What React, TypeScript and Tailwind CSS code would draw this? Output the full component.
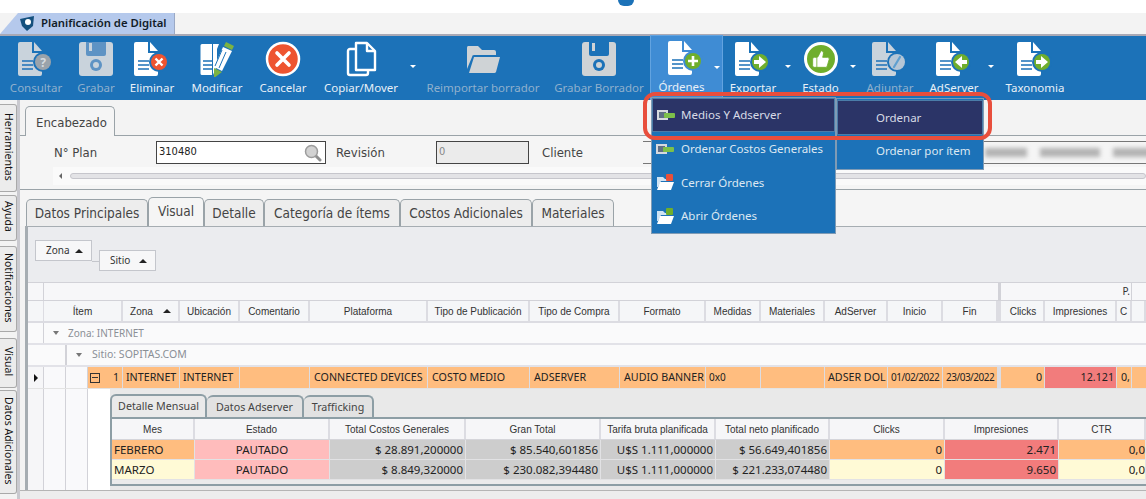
import React from 'react'
import { ThumbsUp } from 'lucide-react'

const BLUE = '#1c72b8'

// page with folded corner + round badge, used by most toolbar buttons
const DocIcon = ({ fill = '#fff', line = BLUE, badge, ring = BLUE, children }: { fill?: string; line?: string; badge: string; ring?: string; children?: React.ReactNode }) => (
  <svg width="38" height="36" viewBox="0 0 38 36">
    <path d="M3 1h12v11h10v21a2 2 0 0 1-2 2H3a2 2 0 0 1-2-2V3a2 2 0 0 1 2-2z" fill={fill} />
    <path d="M17 1l8 9h-8z" fill={fill} />
    <path d="M5 20h11M5 24h11M5 28h11" stroke={line} strokeWidth="1.4" />
    <circle cx="26" cy="21" r="10" fill={ring} />
    <circle cx="26" cy="21" r="8" fill={badge} />
    {children}
  </svg>
)

const Plus = () => <path d="M26 16v10M21 21h10" stroke="#fff" strokeWidth="2.6" />
const Cross = () => <path d="M22.5 17.500l7 7M29.500 17.500l-7 7" stroke="#fff" strokeWidth="2.4" />
const ArrowRight = () => <path d="M20 19h5v-4l7 6-7 6v-4h-5z" fill="#fff" />
const ArrowLeft = () => <path d="M32 19h-5v-4l-7 6 7 6v-4h5z" fill="#fff" />

const Floppy = ({ fill, hole }: { fill: string; hole: string }) => (
  <svg width="36" height="36" viewBox="0 0 36 36">
    <path d="M4 1h28a3 3 0 0 1 3 3v28a3 3 0 0 1-3 3H4a3 3 0 0 1-3-3V4a3 3 0 0 1 3-3z" fill={fill} />
    <path d="M8 1v12a2 2 0 0 0 2 2h16a2 2 0 0 0 2-2V1z" fill={hole} />
    <rect x="11" y="2" width="3" height="8" fill={fill} />
    <circle cx="18" cy="24" r="6" fill={hole} />
    <circle cx="18" cy="24" r="3" fill={fill} />
  </svg>
)

const Caret = () => (
  <div className="w-[10px] flex justify-center pt-[29px]">
    <div className="w-0 h-0 border-x-[3px] border-x-transparent border-t-[3px] border-t-white" />
  </div>
)

const Tool = ({ label, w, off, children }: { label: string; w: string; off?: boolean; children: React.ReactNode }) => (
  <div className={`${w} flex flex-col items-center pt-[5px]`}>
    <div className="h-[36px] flex items-center justify-center">{children}</div>
    <div className={`mt-[3px] text-[11.500px] leading-[16px] whitespace-nowrap ${off ? 'text-[#8fb0cd]' : 'text-[#e8f0f7]'}`}>{label}</div>
  </div>
)

const Toolbar = () => (
  <div className="h-[66px] bg-[#1c72b8] border-t-2 border-[#a9a9b5] flex pl-[6px] shrink-0">
    <Tool label="Consultar" w="w-[60px]" off>
      <DocIcon fill="#c9d3dc" line="#1c72b8" badge="#9aa3ab">
        <text x="26" y="25.500" textAnchor="middle" fontSize="12" fontWeight="700" fill="#d7dce0">?</text>
      </DocIcon>
    </Tool>
    <Tool label="Grabar" w="w-[60px]" off>
      <Floppy fill="#c9d3dc" hole="#5e93c4" />
    </Tool>
    <Tool label="Eliminar" w="w-[52px]">
      <DocIcon badge="#ee5430"><Cross /></DocIcon>
    </Tool>
    <Tool label="Modificar" w="w-[78px]">
      <svg width="36" height="36" viewBox="0 0 36 36">
        <path d="M3 3h10v31H3a1.500 1.500 0 0 1-1.500-1.500v-28A1.500 1.500 0 0 1 3 3z" fill="#fff" />
        <path d="M14 3h6l-2 5v16l-4 10z" fill="#fff" />
        <path d="M4 20h9M4 24h9M4 28h9" stroke={BLUE} strokeWidth="1.4" />
        <path d="M24 6l9 4-10 20-8-4z" fill="#fff" />
        <path d="M27 1l8 4-2 4-8-4z" fill="#7cb342" />
        <path d="M15 27l8 4-8 6z" fill="#7cb342" />
        <path d="M23 9l-7 16M27 11l-7 16" stroke={BLUE} strokeWidth="1" />
      </svg>
    </Tool>
    <Tool label="Cancelar" w="w-[54px]">
      <svg width="36" height="36" viewBox="0 0 36 36">
        <circle cx="18" cy="18" r="16" fill="#ee5430" stroke="#fff" strokeWidth="2.500" />
        <path d="M12 12l12 12M24 12L12 24" stroke="#fff" strokeWidth="3.600" strokeLinecap="round" />
      </svg>
    </Tool>
    <Tool label="Copiar/Mover" w="w-[94px] ml-[4px]">
      <svg width="36" height="36" viewBox="0 0 36 36" fill="none" stroke="#fff" strokeWidth="2.400" strokeLinejoin="round">
        <path d="M13 2h11l8 8v19H13z" />
        <path d="M24 2v8h8" />
        <path d="M13 8H7a2 2 0 0 0-2 2v22a2 2 0 0 0 2 2h16a2 2 0 0 0 2-2v-3" />
      </svg>
    </Tool>
    <Caret />
    <Tool label="Reimportar borrador" w="w-[130px]" off>
      <svg width="36" height="36" viewBox="0 0 36 36">
        <path d="M3 5h10l4 4h12a2 2 0 0 1 2 2v3H9a2 2 0 0 0-2 2l-5 12V7a2 2 0 0 1 1-2z" fill="#cfd3d6" />
        <path d="M9 16h26l-4 15a2 2 0 0 1-2 1H4z" fill="#cfd3d6" />
      </svg>
    </Tool>
    <Tool label="Grabar Borrador" w="w-[102px]" off>
      <Floppy fill="#cfd3d6" hole="#1c72b8" />
    </Tool>
    <div className="relative w-[73px] -mt-[1px] h-[65px] bg-[#3f8cd4] border border-[#62a3e0] flex flex-col items-center pt-[4px] pr-[10px]">
      <div className="h-[36px] flex items-center pl-[8px]">
        <DocIcon badge="#6fae2c" ring="#3f8cd4"><Plus /></DocIcon>
      </div>
      <div className="mt-[3px] text-[11.500px] leading-[16px] text-[#e8f0f7]">Órdenes</div>
      <div className="absolute right-[2px] top-[30px] w-0 h-0 border-x-[3px] border-x-transparent border-t-[3px] border-t-white" />
    </div>
    <Tool label="Exportar" w="w-[60px]">
      <DocIcon badge="#6fae2c"><ArrowRight /></DocIcon>
    </Tool>
    <Caret />
    <Tool label="Estado" w="w-[55px]">
      <div className="w-[34px] h-[34px] rounded-full bg-[#6fae2c] border-[3px] border-white flex items-center justify-center">
        <ThumbsUp size={20} fill="#fff" stroke="#6fae2c" strokeWidth={1} />
      </div>
    </Tool>
    <Caret />
    <Tool label="Adjuntar" w="w-[64px]" off>
      <DocIcon fill="#c9d3dc" badge="#b5c6d6">
        <path d="M29 16l-6 10" stroke="#5e9fd0" strokeWidth="2.200" strokeLinecap="round" />
      </DocIcon>
    </Tool>
    <Tool label="AdServer" w="w-[64px]">
      <DocIcon badge="#6fae2c"><ArrowLeft /></DocIcon>
    </Tool>
    <Caret />
    <Tool label="Taxonomia" w="w-[78px]">
      <DocIcon badge="#6fae2c"><ArrowRight /></DocIcon>
    </Tool>
  </div>
)

const railTabs = [
  { label: 'Herramientas', cls: 'h-[88px] mt-[4px]' },
  { label: 'Ayuda', cls: 'h-[46px] mt-[3px]' },
  { label: 'Notificaciones', cls: 'h-[86px] mt-[5px]' },
  { label: 'Visual', cls: 'h-[50px] mt-[6px]' },
  { label: 'Datos Adicionales', cls: 'h-[104px] mt-[2px]' },
]

const Rail = () => (
  <div className="w-[20px] shrink-0 border-r-[3px] border-[#c9c9cf] bg-[#f3f3f3] flex flex-col">
    {railTabs.map(t => (
      <div key={t.label} className={`${t.cls} w-[17px] bg-[#ececec] border border-l-0 border-[#a9a9a9] rounded-r-[3px] flex items-center justify-center pb-[3px]`}>
        <span className="[writing-mode:vertical-rl] text-[10.500px] text-[#111] whitespace-nowrap">{t.label}</span>
      </div>
    ))}
  </div>
)

const condensed = "font-['DejaVu_Sans',sans-serif] font-stretch-condensed"

const Encabezado = () => (
  <>
    <div className="h-[35px] pl-[5px] pt-[6px] shrink-0">
      <div className={`relative w-[90px] h-[30px] bg-[#f5f5f5] border border-b-0 border-[#9aa3a8] rounded-t-[5px] pl-[10px] pt-[6px] text-[13px] text-[#444] ${condensed} z-10`}>Encabezado</div>
    </div>
    <div className="h-[55px] border-y border-[#9aa3a8] bg-[#f5f5f5] shrink-0 overflow-hidden">
      <div className={`flex items-center h-[23px] mt-[5px] text-[13px] text-[#444] ${condensed}`}>
        <div className="w-[136px] shrink-0 pl-[34px]">N° Plan</div>
        <div className="w-[170px] shrink-0 h-[23px] bg-white border border-[#444] flex items-center justify-between pl-[2px] pr-[3px] text-[11px] text-[#222]">
          310480
          <svg width="18" height="18" viewBox="0 0 18 18">
            <path d="M11 11l5 5" stroke="#8f8f8f" strokeWidth="3" strokeLinecap="round" />
            <circle cx="7.500" cy="7.500" r="6" fill="#d2d2d2" stroke="#9c9c9c" strokeWidth="1.500" />
          </svg>
        </div>
        <div className="w-[110px] shrink-0 pl-[10px]">Revisión</div>
        <div className="w-[93px] shrink-0 h-[23px] bg-[#ebebeb] border border-[#444] flex items-center pl-[2px] text-[11px] text-[#888]">0</div>
        <div className="w-[114px] shrink-0 pl-[13px]">Cliente</div>
        {/* client name is smeared out in the screenshot, so only grey smudges here */}
        <div className="flex-1 min-w-0 overflow-hidden h-[23px] border-y border-[#777] flex items-center pl-[342px] gap-[13px]">
          <div className="w-[42px] shrink-0 h-[9px] bg-[#b4b4b4] blur-[2px]" />
          <div className="w-[60px] shrink-0 h-[9px] bg-[#b4b4b4] blur-[2px]" />
          <div className="w-[40px] shrink-0 h-[9px] bg-[#b4b4b4] blur-[2px]" />
        </div>
      </div>
      <div className="h-[18px] ml-[33px] mt-[3px] bg-[#fafafa] flex items-center pl-[6px] gap-[8px]">
        <div className="w-0 h-0 border-y-[3px] border-y-transparent border-r-[3px] border-r-[#666]" />
        <div className="flex-1 h-[6px] rounded-[3px] bg-[#e3e3e6] border border-[#c6c6cc]" />
      </div>
    </div>
  </>
)

const mainTabs = [
  { label: 'Datos Principales', w: 'w-[122px]' },
  { label: 'Visual', w: 'w-[56px]', on: true },
  { label: 'Detalle', w: 'w-[60px]' },
  { label: 'Categoría de ítems', w: 'w-[136px]' },
  { label: 'Costos Adicionales', w: 'w-[132px]' },
  { label: 'Materiales', w: 'w-[82px]' },
]

const MainTabs = () => (
  <div className="h-[36px] pt-[7px] pl-[6px] bg-[#f5f5f5] flex items-end shrink-0">
    {mainTabs.map(t => (
      <div key={t.label} className={`${t.w} ${t.on ? 'h-[29px] bg-[#f5f5f5] pb-[2px]' : 'h-[27px] bg-[#ededed] pt-[1px]'} border border-b-0 border-[#9aa3a8] rounded-t-[5px] flex items-center justify-center text-[13.500px] text-[#444] whitespace-nowrap ${condensed}`}>{t.label}</div>
    ))}
  </div>
)

const UpTri = () => <div className="w-0 h-0 border-x-[4px] border-x-transparent border-b-[4px] border-b-[#222]" />

const GroupChip = ({ label, cls }: { label: string; cls: string }) => (
  <div className={`${cls} h-[21px] w-[57px] bg-[#f7f7f8] border border-[#c4c6cc] flex items-center justify-between pl-[10px] pr-[8px] text-[10px] text-[#333]`}>
    {label}
    <UpTri />
  </div>
)

const cols = 'grid grid-cols-[16px_79px_57px_60px_70px_118px_102px_90px_86px_55px_64px_63px_55px_55px_47px_72px_15px_14px]'

const headers = ['Ítem', 'Zona', 'Ubicación', 'Comentario', 'Plataforma', 'Tipo de Publicación', 'Tipo de Compra', 'Formato', 'Medidas', 'Materiales', 'AdServer', 'Inicio', 'Fin', 'Clicks', 'Impresiones', 'C', '']

const rowCell = 'border-r border-[#dcdce2] flex items-center whitespace-nowrap overflow-hidden'
const liberation = "font-['Liberation_Sans',sans-serif]"

const MainGrid = () => (
  <div className="text-[10px] text-[#333] font-['Noto_Sans',sans-serif]">
    {/* band row */}
    <div className="flex h-[19px] bg-[#f7f7f9] border-y border-[#d2d2d8]">
      <div className="w-[16px] border-r border-[#d2d2d8]" />
      <div className="w-[954px]" />
      <div className="w-[134px] border-l-[3px] border-r border-[#d2d2d8] text-right text-[10px] pr-[1px] leading-[17px]">P.</div>
    </div>
    {/* column headers */}
    <div className={`${cols} h-[22px] bg-[#f5f6f8] border-b-2 border-[#dcdce2] ${liberation}`}>
      <div className="border-r border-[#dcdce2]" />
      {headers.map((h, i) => (
        <div key={i} className={`border-r-2 border-[#dcdce2] flex items-center justify-center gap-[10px] whitespace-nowrap overflow-hidden ${h === 'Clicks' ? 'border-l-[3px] pl-[2px]' : ''}`}>
          {h}
          {h === 'Zona' && <UpTri />}
        </div>
      ))}
    </div>
    {/* group rows */}
    <div className="flex h-[22px] bg-[#fafafb] border-b-2 border-[#e2e2e8]">
      <div className="w-[16px] border-r border-[#d2d2d8]" />
      <div className="flex items-center pl-[9px] gap-[9px] text-[#8a8f96]">
        <div className="w-0 h-0 border-x-[3px] border-x-transparent border-t-[4px] border-t-[#777]" />
        Zona: INTERNET
      </div>
    </div>
    <div className="flex h-[22px] bg-[#fafafb] border-b-2 border-[#e2e2e8]">
      <div className="w-[38px] border-r border-[#d2d2d8]" />
      <div className="flex items-center pl-[9px] gap-[10px] text-[10.500px] text-[#8a8f96] border-l border-[#d2d2d8]">
        <div className="w-0 h-0 border-x-[3px] border-x-transparent border-t-[4px] border-t-[#777]" />
        Sitio: SOPITAS.COM
      </div>
    </div>
    {/* data row */}
    <div className={`${cols} h-[22px] bg-[#ffbd7f] text-[10.700px] text-[#222] border-b border-[#e3e3e3]`}>
      <div className="bg-[#f6f6f8] border-r border-[#d2d2d8] flex items-center justify-center">
        <div className="w-0 h-0 border-y-[4px] border-y-transparent border-l-[4px] border-l-[#111]" />
      </div>
      <div className="flex border-r border-[#dcdce2]">
        <div className="w-[22px] bg-[#f9f9fb] border-r border-[#d2d2d8]" />
        <div className="w-[22px] bg-[#f9f9fb] border-r border-[#d2d2d8]" />
        <div className="flex-1 flex items-center justify-between pl-[2px] pr-[3px]">
          <div className="w-[10px] h-[10px] border border-[#333] flex items-center justify-center">
            <div className="w-[6px] h-[1px] bg-[#333]" />
          </div>
          1
        </div>
      </div>
      <div className={`${rowCell} pl-[3px]`}>INTERNET</div>
      <div className={`${rowCell} pl-[3px]`}>INTERNET</div>
      <div className={rowCell} />
      <div className={`${rowCell} pl-[4px]`}>CONNECTED DEVICES</div>
      <div className={`${rowCell} pl-[4px]`}>COSTO MEDIO</div>
      <div className={`${rowCell} pl-[4px]`}>ADSERVER</div>
      <div className={`${rowCell} pl-[4px]`}>AUDIO BANNER</div>
      <div className={`${rowCell} pl-[3px] text-[10px]`}>0x0</div>
      <div className={rowCell} />
      <div className={`${rowCell} pl-[3px]`}>ADSER DOL</div>
      <div className={`${rowCell} pl-[3px] text-[10px] tracking-[-0.5px]`}>01/02/2022</div>
      <div className={`${rowCell} pl-[3px] text-[10px] tracking-[-0.5px]`}>23/03/2022</div>
      <div className={`${rowCell} justify-end pr-[2px] border-l-[3px]`}>0</div>
      <div className={`${rowCell} justify-end pr-[2px] bg-[#f27c7c]`}>12.121</div>
      <div className={`${rowCell} pl-[4px]`}>0,</div>
      <div />
    </div>
  </div>
)

const detailCols = 'grid grid-cols-[83px_135px_136px_135px_115px_114px_115px_114px_87px]'
const detailHeaders = ['Mes', 'Estado', 'Total Costos Generales', 'Gran Total', 'Tarifa bruta planificada', 'Total neto planificado', 'Clicks', 'Impresiones', 'CTR']

const detailRows = [
  { mes: 'FEBRERO', mesBg: 'bg-[#ffbd7f]', rest: 'bg-[#ffbd7f]', vals: ['$ 28.891,200000', '$ 85.540,601856', 'U$S 1.111,000000', '$ 56.649,401856'], clicks: '0', imp: '2.471', ctr: '0,0' },
  { mes: 'MARZO', mesBg: 'bg-[#fffad6]', rest: 'bg-[#fffad6]', vals: ['$ 8.849,320000', '$ 230.082,394480', 'U$S 1.111,000000', '$ 221.233,074480'], clicks: '0', imp: '9.650', ctr: '0,0' },
]

const dCell = 'border-r border-[#e2e2e4] flex items-center text-[11.500px] text-[#222] whitespace-nowrap overflow-hidden'

const DetailPanel = () => (
  <div className="flex-1 min-w-0 pt-[5px] bg-[#e9e9e9] font-['Noto_Sans',sans-serif]">
    <div className="flex items-end h-[23px] text-[10.700px] text-[#444] whitespace-nowrap">
      <div className="w-[97px] h-[23px] bg-[#eaeaea] border-2 border-b-0 border-[#8d9ea5] rounded-t-[6px] flex items-center justify-center">Detalle Mensual</div>
      <div className="w-[97px] h-[22px] bg-[#e2e2e2] border-2 border-b-0 border-l-0 border-[#8d9ea5] rounded-t-[6px] flex items-center justify-center">Datos Adserver</div>
      <div className="w-[70px] h-[22px] bg-[#e2e2e2] border-2 border-b-0 border-l-0 border-[#8d9ea5] rounded-t-[6px] flex items-center justify-center">Trafficking</div>
    </div>
    <div className="h-[69px] border-y-2 border-l-2 border-[#8d9ea5] bg-[#ebebeb]">
      <div className={`${detailCols} h-[21px] bg-[#f6f6f8] border-b border-[#d5d5da] text-[10px] text-[#333] ${liberation}`}>
        {detailHeaders.map(h => (
          <div key={h} className="border-r-2 border-[#dcdce2] flex items-center justify-center whitespace-nowrap">{h}</div>
        ))}
      </div>
      {detailRows.map(r => (
        <div key={r.mes} className={`${detailCols} h-[20px] border-b border-[#e2e2e4]`}>
          <div className={`${dCell} ${r.mesBg} pl-[2px]`}>{r.mes}</div>
          <div className={`${dCell} bg-[#ffbcbc] justify-center`}>PAUTADO</div>
          {r.vals.map(v => (
            <div key={v} className={`${dCell} bg-[#cdcdcd] justify-end pr-[2px]`}>{v}</div>
          ))}
          <div className={`${dCell} ${r.rest} justify-end pr-[2px]`}>{r.clicks}</div>
          <div className={`${dCell} bg-[#f27c7c] justify-end pr-[2px]`}>{r.imp}</div>
          <div className={`${dCell} ${r.rest} justify-end`}>{r.ctr}</div>
        </div>
      ))}
    </div>
  </div>
)

const menuItems = ['Ordenar Costos Generales', 'Cerrar Órdenes', 'Abrir Órdenes']

const MenuIcon = ({ kind }: { kind: number }) => {
  if (kind < 2) {
    return (
      <svg width="18" height="12" viewBox="0 0 18 12">
        <rect x="0" y="1" width="11" height="10" fill="#d6d9de" />
        <rect x="2" y="3" width="7" height="6" fill="#5f6f86" />
        <rect x="7" y="4" width="11" height="5" rx="1" fill="#7cc04a" />
      </svg>
    )
  }
  return (
    <svg width="18" height="16" viewBox="0 0 18 16">
      <path d="M1 3h6l2 2h7v2H5L2 13H1z" fill="#cfe3f3" />
      <path d="M4 8h14l-3 8H1z" fill="#fff" />
      <rect x="10" y="0" width="7" height="7" rx="1" fill={kind === 2 ? '#e8503a' : '#6fae2c'} />
    </svg>
  )
}

// dropdown opened from Órdenes with its submenu, plus the red highlight over both
const Menus = () => (
  <>
    <div className="absolute left-[651px] top-[97px] w-[185px] h-[137px] bg-[#1c72b8] border border-[#7f9bb5] text-[11.500px] text-[#dce8f2] z-20">
      <div className="h-[34px] bg-[#2b3467] border border-[#4b7ca8] flex items-center pl-[4px] gap-[6px] text-[#d8dbe6]">
        <MenuIcon kind={0} />
        Medios Y Adserver
      </div>
      {menuItems.map((m, i) => (
        <div key={m} className="h-[33.500px] flex items-center pl-[4px] gap-[7px]">
          <MenuIcon kind={i + 1} />
          {m}
        </div>
      ))}
    </div>
    <div className="absolute left-[836px] top-[98px] w-[148px] h-[72px] bg-[#1c72b8] border border-[#7f9bb5] text-[11.500px] text-[#dce8f2] z-20">
      <div className="h-[35px] mt-[1px] bg-[#2b3467] border border-[#4b7ca8] flex items-center pl-[38px] text-[#d8dbe6]">Ordenar</div>
      <div className="h-[32px] flex items-center pl-[39px]">Ordenar por ítem</div>
    </div>
    <div className="absolute left-[643px] top-[92px] w-[349px] h-[48px] border-4 border-[#e84e3c] rounded-[12px] z-30" />
  </>
)

export default function App() {
  return (
    <div className="relative w-[1146px] h-[499px] overflow-hidden bg-[#f3f3f3] font-['Noto_Sans',sans-serif] flex flex-col">
      <div className="h-[13px] bg-white shrink-0 flex justify-end pr-[512px]">
        <div className="w-[16px] h-[6px] bg-[#1c72b8] rounded-b-full" />
      </div>
      <div className="h-[21px] shrink-0 flex">
        <div className="w-[175px] h-[21px] bg-[#b5c9ec] border-r border-[#9aa9c6] [clip-path:polygon(0_100%,18px_0,100%_0,100%_100%)] pl-[20px] flex items-center gap-[6px] text-[11.300px] font-semibold text-[#111c28] whitespace-nowrap">
          <svg width="15" height="15" viewBox="0 0 15 15">
            <path d="M0 3l14-3-1 10-6 5-5-5z" fill="#14507e" />
            <circle cx="8" cy="6" r="3" fill="#fff" />
          </svg>
          Planificación de Digital
        </div>
      </div>
      <Toolbar />
      <div className="flex-1 flex min-h-0">
        <Rail />
        <div className="flex-1 min-w-0 flex flex-col">
          <Encabezado />
          <MainTabs />
          <div className="ml-[5px] h-[264px] border-t border-l-[3px] border-[#a6adb2] bg-[#ebecef] overflow-hidden shrink-0 w-[1121px]">
            <div className="h-[55px] flex pt-[13px] pl-[7px]">
              <GroupChip label="Zona" cls="" />
              <div className="w-[7px] h-[3px] mt-[19px] border-b border-[#c4c6cc]" />
              <GroupChip label="Sitio" cls="mt-[10px]" />
            </div>
            <MainGrid />
            <div className="flex h-[102px]">
              <div className="w-[16px] bg-[#f6f6f8] border-r border-[#d2d2d8]" />
              <div className="w-[22px] bg-[#f9f9fb] border-r border-[#d2d2d8]" />
              <div className="w-[22px] bg-[#f9f9fb] border-r border-[#d2d2d8]" />
              <div className="w-[22px] bg-white" />
              <DetailPanel />
            </div>
          </div>
          <div className="flex-1 border-t border-[#b5b5b5] bg-[#ededed]" />
        </div>
      </div>
      <Menus />
    </div>
  )
}
